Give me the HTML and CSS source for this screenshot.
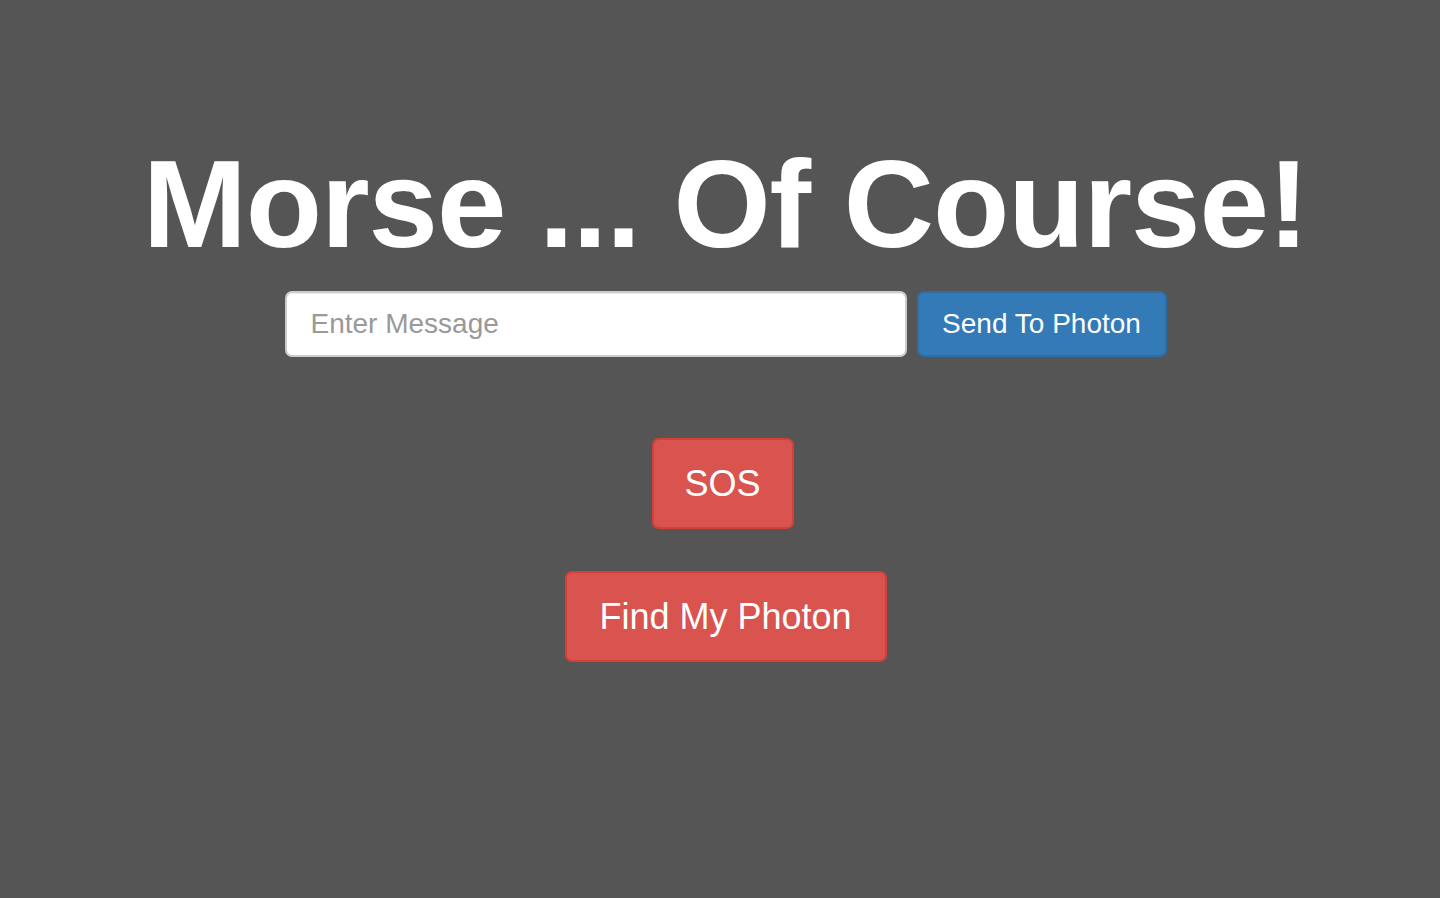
FILE: index.html
```html
<!DOCTYPE html>
<html>
<head>
<meta charset="utf-8">
<link rel="stylesheet" href="styles.css">
</head>
<body>
<div class="page">
  <h1 class="title">Morse ... Of Course!</h1>
  <form class="send-row">
    <input class="msg-input" type="text" placeholder="Enter Message">
    <button class="btn btn-blue" type="button">Send To Photon</button>
  </form>
  <div class="actions">
    <button class="btn btn-red btn-sos" type="button">SOS</button>
    <button class="btn btn-red btn-find" type="button">Find My Photon</button>
  </div>
</div>
</body>
</html>
```
FILE: styles.css
```css
html, body {
  margin: 0;
  padding: 0;
  background: #555555;
  height: 100%;
}
body {
  font-family: "Liberation Sans", Arial, Helvetica, sans-serif;
  color: #fff;
}
.page {
  display: flex;
  flex-direction: column;
  align-items: center;
  padding-left: 11px;
  padding-top: 134px;
}
.title {
  margin: 0;
  font-size: 125px;
  font-weight: bold;
  line-height: 140px;
  color: #fff;
  letter-spacing: -1.1px;
}
.send-row {
  display: flex;
  gap: 10px;
  margin-top: 17px;
}
.msg-input {
  box-sizing: border-box;
  width: 622px;
  height: 66px;
  border: 2px solid #cccccc;
  border-radius: 7px;
  background: #fff;
  padding: 0 24px;
  font-family: "Liberation Sans", Arial, sans-serif;
  font-size: 28px;
  color: #555;
  outline: none;
  box-shadow: inset 0 1px 1px rgba(0,0,0,.075);
}
.msg-input::placeholder {
  color: #999;
}
.btn {
  box-sizing: border-box;
  font-family: "Liberation Sans", Arial, sans-serif;
  color: #fff;
  border-radius: 7px;
  cursor: pointer;
  padding: 0;
}
.btn-blue {
  width: 250px;
  height: 66px;
  background: #337ab7;
  border: 2px solid #2e6da4;
  font-size: 28px;
}
.actions {
  display: flex;
  flex-direction: column;
  align-items: center;
  gap: 42px;
  margin-top: 81px;
}
.btn-red {
  background: #d9534f;
  border: 2px solid #d43f3a;
  height: 91px;
  font-size: 36px;
}
.btn-sos {
  width: 142px;
  margin-left: -6px;
}
.btn-find {
  width: 322px;
}
```
